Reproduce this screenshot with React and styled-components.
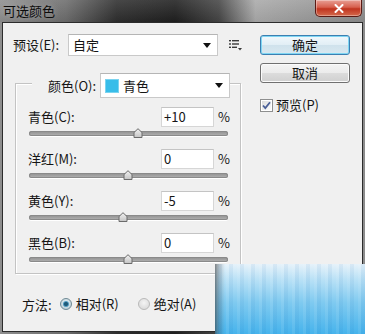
import React from "react";
import styled, { createGlobalStyle } from "styled-components";

const Global = createGlobalStyle`
  html, body {
    margin: 0;
    padding: 0;
    width: 365px;
    height: 334px;
    overflow: hidden;
    background: #7a7a7a;
  }
  body {
    font-family: "Noto Sans CJK SC", "Noto Sans", sans-serif;
    font-size: 13px;
    color: #151515;
  }
`;

const Window = styled.div`
  position: relative;
  width: 365px;
  height: 334px;
  display: flex;
  flex-direction: column;
  background: linear-gradient(90deg, #8e8e8e 0%, #6c6c6c 18%, #2e2e2e 32%, #1f1f1f 48%, #454545 60%, #a9a9a9 70%, #9a9a9a 85%, #8c8c8c 100%);
`;

const TitleBar = styled.div`
  height: 22px;
  flex: none;
  display: flex;
  align-items: flex-start;
  justify-content: space-between;
  background: linear-gradient(180deg, rgba(255,255,255,0.12), rgba(0,0,0,0.05));
`;

const Title = styled.div`
  padding: 2px 0 0 3px;
  font-size: 13px;
  line-height: 18px;
  color: #0c0c0c;
  text-shadow: 0 0 6px rgba(255,255,255,0.35);
`;

const CloseBtn = styled.div`
  width: 45px;
  height: 16px;
  margin-right: 3px;
  display: flex;
  align-items: center;
  justify-content: center;
  border: 1px solid #5a1a14;
  border-top: none;
  border-radius: 0 0 5px 5px;
  background: linear-gradient(180deg, #e8a095 0%, #d7604e 45%, #c0341f 55%, #d46a4c 100%);
  box-shadow: inset 0 0 0 1px rgba(255,255,255,0.35);
`;

const Body = styled.div`
  flex: 1;
  margin: 0 2px 2px 2px;
  border: 1px solid #2c2c2c;
  background: #f0f0f0;
  display: flex;
`;

const Main = styled.div`
  width: 247px;
  padding: 11px 0 0 10px;
  box-sizing: border-box;
  display: flex;
  flex-direction: column;
`;

const Row = styled.div`
  display: flex;
  align-items: center;
`;

const Label = styled.span`
  width: ${(p) => p.$w}px;
  flex: none;
  white-space: nowrap;
  line-height: 16px;
`;

const Select = styled.div`
  width: ${(p) => p.$w}px;
  height: ${(p) => p.$h}px;
  box-sizing: border-box;
  flex: none;
  display: flex;
  align-items: center;
  gap: 4px;
  padding: 0 6px 0 4px;
  background: #fff;
  border: 1px solid #c9c9c9;
  border-top-color: #b5b5b5;
`;

const SelectText = styled.span`
  flex: 1;
  line-height: 16px;
`;

const Arrow = styled.span`
  width: 0;
  height: 0;
  border-left: 4px solid transparent;
  border-right: 4px solid transparent;
  border-top: 5px solid #111;
`;

const Swatch = styled.span`
  width: 14px;
  height: 14px;
  background: #38bde9;
  border: 1px solid #7ad4f0;
  box-sizing: border-box;
`;

const MenuIcon = styled.svg`
  margin-left: 11px;
  flex: none;
`;

const Group = styled.div`
  margin: 27px 0 0 2px;
  width: 226px;
  box-sizing: border-box;
  border: 1px solid #c3c3c3;
  box-shadow: 1px 1px 0 #fff, inset 1px 1px 0 #fff;
  padding: 0 10px 4px 12px;
`;

const GroupHead = styled.div`
  margin: -11px 0 0 4px;
  width: 198px;
  padding-left: 16px;
  box-sizing: border-box;
  height: 25px;
  display: flex;
  align-items: center;
  background: #f0f0f0;
`;

const Params = styled.div`
  margin-top: 9px;
  display: flex;
  flex-direction: column;
  gap: 6px;
`;

const Param = styled.div`
  display: flex;
  flex-direction: column;
`;

const ParamTop = styled.div`
  display: grid;
  grid-template-columns: 1fr 53px 16px;
  align-items: center;
  height: 20px;
`;

const NumInput = styled.div`
  height: 20px;
  box-sizing: border-box;
  background: #fff;
  border: 1px solid #d6d6d6;
  border-top-color: #c4c4c4;
  padding-left: 2px;
  line-height: 18px;
`;

const Percent = styled.span`
  justify-self: end;
  line-height: 16px;
`;

const SliderArea = styled.div`
  position: relative;
  height: 16px;
  margin: 0 2px 0 1px;
`;

const Track = styled.div`
  margin-top: 4px;
  height: 5px;
  border-radius: 3px;
  background: linear-gradient(180deg, #8f8f8f, #b3b3b3);
  box-shadow: inset 0 0 0 1px #8a8a8a, 0 1px 0 #fff;
`;

const Thumb = styled.svg`
  position: absolute;
  top: 1px;
`;

const MethodRow = styled(Row)`
  margin: 21px 0 0 9px;
  height: 18px;
`;

const RadioItem = styled.label`
  display: flex;
  align-items: center;
  gap: 4px;
  margin-left: ${(p) => p.$ml}px;
  line-height: 16px;
`;

const Side = styled.div`
  padding: 12px 0 0 10px;
  display: flex;
  flex-direction: column;
`;

const Button = styled.div`
  width: 90px;
  height: 20px;
  box-sizing: border-box;
  display: flex;
  align-items: center;
  justify-content: center;
  border-radius: 3px;
  margin-top: ${(p) => (p.$first ? 0 : 8)}px;
  border: 1px solid ${(p) => (p.$primary ? "#3c7fb1" : "#707070")};
  background: ${(p) =>
    p.$primary
      ? "linear-gradient(180deg, #f1f8fc 0%, #e1eef5 50%, #cfe2ec 51%, #d9e8f0 100%)"
      : "linear-gradient(180deg, #f4f4f4 0%, #ebebeb 50%, #dcdcdc 51%, #cfcfcf 100%)"};
  box-shadow: ${(p) => (p.$primary ? "inset 0 0 0 1px #7fd6f3" : "inset 0 0 0 1px #fbfbfb")};
  line-height: 16px;
`;

const CheckRow = styled.label`
  margin-top: 14px;
  display: flex;
  align-items: center;
  gap: 3px;
  line-height: 16px;
`;

const Watermark = styled.div`
  position: absolute;
  right: 0;
  bottom: 0;
  width: 150px;
  height: 70px;
  background:
    linear-gradient(90deg, rgba(40,40,40,0.55) 0px, rgba(60,60,60,0.25) 4px, rgba(0,0,0,0) 10px),
    repeating-linear-gradient(90deg, rgba(255,255,255,0.08) 0 3px, rgba(0,80,160,0.06) 3px 7px, rgba(255,255,255,0) 7px 11px),
    linear-gradient(180deg, #e6f2fa 0%, #b9e1f6 22%, #7fcaf0 55%, #46b3ec 100%);
`;

const params = [
  { label: "青色(C):", value: "+10", v: 10 },
  { label: "洋红(M):", value: "0", v: 0 },
  { label: "黄色(Y):", value: "-5", v: -5 },
  { label: "黑色(B):", value: "0", v: 0 },
];

const Radio = ({ on }) => (
  <svg width="12" height="12" viewBox="0 0 12 12">
    <defs>
      <radialGradient id={on ? "rOn" : "rOff"} cx="50%" cy="40%" r="60%">
        <stop offset="0%" stopColor={on ? "#e9f3f6" : "#f4f4f4"} />
        <stop offset="100%" stopColor={on ? "#b9cdd6" : "#d9d9d9"} />
      </radialGradient>
    </defs>
    <circle cx="6" cy="6" r="5.5" fill={`url(#${on ? "rOn" : "rOff"})`} stroke={on ? "#6f8a95" : "#b9b9b9"} />
    {on && <circle cx="6" cy="6" r="2.6" fill="#1f5a78" stroke="#4aa0c8" strokeWidth="0.8" />}
  </svg>
);

export default function App() {
  return (
    <Window>
      <Global />
      <TitleBar>
        <Title>可选颜色</Title>
        <CloseBtn>
          <svg width="10" height="9" viewBox="0 0 10 9">
            <path d="M1.5 1 L8.5 8 M8.5 1 L1.5 8" stroke="#fff" strokeWidth="2" strokeLinecap="round" />
          </svg>
        </CloseBtn>
      </TitleBar>
      <Body>
        <Main>
          <Row>
            <Label $w={55}>预设(E):</Label>
            <Select $w={150} $h={22}>
              <SelectText>自定</SelectText>
              <Arrow />
            </Select>
            <MenuIcon width="14" height="12" viewBox="0 0 14 12">
              <g fill="#3a3a3a">
                <rect x="0" y="1" width="2" height="1.4" />
                <rect x="3" y="1" width="7" height="1.4" />
                <rect x="0" y="4.3" width="2" height="1.4" />
                <rect x="3" y="4.3" width="7" height="1.4" />
                <rect x="0" y="7.6" width="2" height="1.4" />
                <rect x="3" y="7.6" width="5" height="1.4" />
                <path d="M9 9 L13 9 L11 11.5 Z" />
              </g>
            </MenuIcon>
          </Row>
          <Group>
            <GroupHead>
              <Label $w={52}>颜色(O):</Label>
              <Select $w={130} $h={25}>
                <Swatch />
                <SelectText>青色</SelectText>
                <Arrow />
              </Select>
            </GroupHead>
            <Params>
              {params.map((p) => (
                <Param key={p.label}>
                  <ParamTop>
                    <Label>{p.label}</Label>
                    <NumInput>{p.value}</NumInput>
                    <Percent>%</Percent>
                  </ParamTop>
                  <SliderArea>
                    <Track />
                    <Thumb width="10" height="10" viewBox="0 0 10 10" style={{ left: 94 + p.v * 0.99 }}>
                      <defs>
                        <linearGradient id="thumbG" x1="0" y1="0" x2="0" y2="1">
                          <stop offset="0%" stopColor="#f2f2f2" />
                          <stop offset="100%" stopColor="#c4c4c4" />
                        </linearGradient>
                      </defs>
                      <path d="M1 9.5 L1 4.5 L5 0.7 L9 4.5 L9 9.5 Z" fill="url(#thumbG)" stroke="#6b6b6b" strokeWidth="1" strokeLinejoin="round" />
                    </Thumb>
                  </SliderArea>
                </Param>
              ))}
            </Params>
          </Group>
          <MethodRow>
            <span>方法:</span>
            <RadioItem $ml={8}>
              <Radio on />
              相对(R)
            </RadioItem>
            <RadioItem $ml={19}>
              <Radio />
              绝对(A)
            </RadioItem>
          </MethodRow>
        </Main>
        <Side>
          <Button $primary $first>确定</Button>
          <Button>取消</Button>
          <CheckRow>
            <svg width="13" height="13" viewBox="0 0 13 13">
              <defs>
                <linearGradient id="cbG" x1="0" y1="0" x2="1" y2="1">
                  <stop offset="0%" stopColor="#dcdcdc" />
                  <stop offset="100%" stopColor="#fbfbfb" />
                </linearGradient>
              </defs>
              <rect x="0.5" y="0.5" width="12" height="12" fill="#fff" stroke="#8e8f8f" />
              <rect x="2" y="2" width="9" height="9" fill="url(#cbG)" />
              <path d="M3 6.5 L5.3 9 L10 3.2" fill="none" stroke="#4a5f97" strokeWidth="1.8" />
            </svg>
            预览(P)
          </CheckRow>
        </Side>
      </Body>
      <Watermark />
    </Window>
  );
}
